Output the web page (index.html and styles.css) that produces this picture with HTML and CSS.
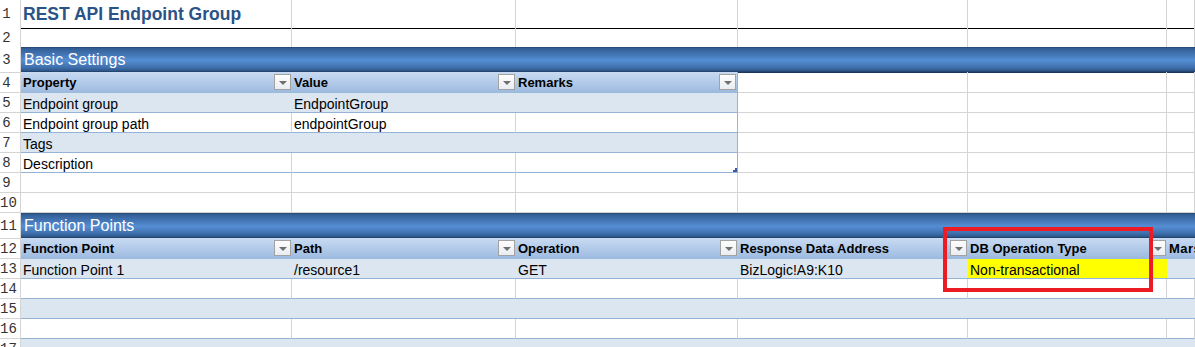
FILE: index.html
```html
<!DOCTYPE html>
<html lang="en">
<head>
    <meta charset="UTF-8">
    <title>REST API Endpoint Group</title>
    <link rel="stylesheet" href="styles.css">
</head>
<body>
    <div class="sheet">
        <!-- row 1: sheet title -->
        <div class="row r1">
            <div class="rn">1</div>
            <div class="c title">REST API Endpoint Group</div>
            <div class="c"></div><div class="c"></div><div class="c"></div><div class="c"></div><div class="c"></div>
        </div>
        <div class="row r2">
            <div class="rn">2</div>
            <div class="c"></div><div class="c"></div><div class="c"></div><div class="c"></div><div class="c"></div><div class="c"></div>
        </div>

        <!-- basic settings -->
        <div class="row band">
            <div class="rn">3</div>
            <div class="band-cell">Basic Settings</div>
        </div>
        <div class="row hdr-row">
            <div class="rn">4</div>
            <div class="c th">Property<span class="dd"></span></div>
            <div class="c th">Value<span class="dd"></span></div>
            <div class="c th last">Remarks<span class="dd"></span></div>
            <div class="c"></div><div class="c"></div><div class="c"></div>
        </div>
        <div class="row">
            <div class="rn">5</div>
            <div class="c td odd">Endpoint group</div>
            <div class="c td odd">EndpointGroup</div>
            <div class="c td odd last"></div>
            <div class="c"></div><div class="c"></div><div class="c"></div>
        </div>
        <div class="row">
            <div class="rn">6</div>
            <div class="c td">Endpoint group path</div>
            <div class="c td">endpointGroup</div>
            <div class="c td last"></div>
            <div class="c"></div><div class="c"></div><div class="c"></div>
        </div>
        <div class="row">
            <div class="rn">7</div>
            <div class="c td odd">Tags</div>
            <div class="c td odd"></div>
            <div class="c td odd last"></div>
            <div class="c"></div><div class="c"></div><div class="c"></div>
        </div>
        <div class="row">
            <div class="rn">8</div>
            <div class="c td">Description</div>
            <div class="c td"></div>
            <div class="c td last"><span class="resize"></span></div>
            <div class="c"></div><div class="c"></div><div class="c"></div>
        </div>
        <div class="row">
            <div class="rn">9</div>
            <div class="c"></div><div class="c"></div><div class="c"></div><div class="c"></div><div class="c"></div><div class="c"></div>
        </div>
        <div class="row r10">
            <div class="rn">10</div>
            <div class="c"></div><div class="c"></div><div class="c"></div><div class="c"></div><div class="c"></div><div class="c"></div>
        </div>

        <!-- function points -->
        <div class="row band">
            <div class="rn">11</div>
            <div class="band-cell">Function Points</div>
        </div>
        <div class="row hdr-row">
            <div class="rn">12</div>
            <div class="c th">Function Point<span class="dd"></span></div>
            <div class="c th">Path<span class="dd"></span></div>
            <div class="c th">Operation<span class="dd"></span></div>
            <div class="c th">Response Data Address<span class="dd"></span></div>
            <div class="c th">DB Operation Type<span class="dd"></span></div>
            <div class="c th wide">Marshaller</div>
        </div>
        <div class="row">
            <div class="rn">13</div>
            <div class="c td odd">Function Point 1</div>
            <div class="c td odd">/resource1</div>
            <div class="c td odd">GET</div>
            <div class="c td odd">BizLogic!A9:K10</div>
            <div class="c td odd mark">Non-transactional</div>
            <div class="c td odd"></div>
        </div>
        <div class="row">
            <div class="rn">14</div>
            <div class="c td"></div><div class="c td"></div><div class="c td"></div><div class="c td"></div><div class="c td"></div><div class="c td"></div>
        </div>
        <div class="row">
            <div class="rn">15</div>
            <div class="c td odd"></div><div class="c td odd"></div><div class="c td odd"></div><div class="c td odd"></div><div class="c td odd"></div><div class="c td odd"></div>
        </div>
        <div class="row">
            <div class="rn">16</div>
            <div class="c td"></div><div class="c td"></div><div class="c td"></div><div class="c td"></div><div class="c td"></div><div class="c td"></div>
        </div>
        <div class="row">
            <div class="rn">17</div>
            <div class="c td odd"></div><div class="c td odd"></div><div class="c td odd"></div><div class="c td odd"></div><div class="c td odd"></div><div class="c td odd"></div>
        </div>

        <div class="callout"></div>
    </div>
</body>
</html>
```

FILE: styles.css
```css
body { margin: 0; background: #fff; font-family: "Liberation Sans", Arial, sans-serif; font-size: 13px; color: #000; overflow: hidden; }
.sheet { position: relative; width: 1195px; }

.row { display: grid; grid-template-columns: 21px 271px 224px 222px 230px 199px 1fr; height: 20px; }
.r1 { height: 28px; }
.r2 { height: 19px; }
.band { height: 25px; }
.hdr-row { height: 21px; }

.rn { box-sizing: border-box; border-right: 1px solid #d4d4d4; border-bottom: 1px solid #d4d4d4; font-family: "Liberation Mono", monospace; font-size: 14px; color: #333; text-align: center; padding-right: 7px; line-height: 21px; overflow: hidden; white-space: nowrap; }
.r1 .rn { line-height: 28px; border-bottom: none; }
.r2 .rn { border-bottom: none; }
.band .rn { line-height: 27px; }
.hdr-row .rn { line-height: 22px; }

.c { position: relative; box-sizing: border-box; border-right: 1px solid #d4d4d4; border-bottom: 1px solid #d4d4d4; padding: 0 2px; line-height: 21px; white-space: nowrap; overflow: hidden; }
.r1 .c { border-bottom: 1px solid #000; }
.r2 .c { border-bottom: none; }

.title { font-size: 17.5px; font-weight: bold; color: #2a5386; line-height: 28px; overflow: visible; }

/* blue section bars */
.band-cell { grid-column: 2 / -1; color: #fff; font-size: 16px; padding-left: 3px; line-height: 26px;
    background: linear-gradient(#1f3e66 0, #2f5a90 1px, #3d6ca8 5px, #4d83c6 11px, #558ed5 13px, #4d83c6 16px, #3d6ca8 21px, #2c5486 24px, #1b365a 25px); }

/* table header */
.th { font-weight: bold; border-right: none; border-bottom: none; line-height: 22px;
    background: linear-gradient(#c8daf1, #b0c9e8 55%, #9bb9de); }
.th.last { border-right: 1px solid #95b3d7; }
.th.wide { letter-spacing: 0.5px; }
.dd { position: absolute; right: 1px; top: 2px; width: 15px; height: 14px; border: 1px solid #a2a2a2; background: linear-gradient(#fdfdfd, #e9edf2); }
.dd::after { content: ""; position: absolute; left: 4px; top: 6px; border-left: 4px solid transparent; border-right: 4px solid transparent; border-top: 4px solid #707070; }

/* table body */
.td { font-size: 14px; line-height: 22px; border-bottom: 1px solid #95b3d7; }
.td.odd { background: #dce6f1; border-right: none; }
.td.last { border-right: 1px solid #95b3d7; }
.td.mark { background: #ffff00; }
.resize { position: absolute; right: 0; bottom: 0; width: 4px; height: 4px; background: #3a57a8; clip-path: polygon(100% 0, 100% 100%, 0 100%, 0 50%, 50% 50%, 50% 0); }

.callout { position: absolute; left: 943px; top: 227px; width: 210px; height: 65px; box-sizing: border-box; border: 4px solid #ed1c24; }
```
